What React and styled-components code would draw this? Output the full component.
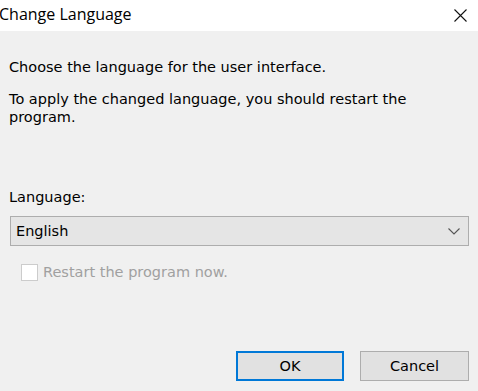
import React from "react";
import styled, { createGlobalStyle } from "styled-components";

const GlobalStyle = createGlobalStyle`
    html, body {
        margin: 0;
        padding: 0;
        background: #f0f0f0;
    }
    #root {
        width: 478px;
        height: 391px;
    }
`;

const Window = styled.div`
    width: 478px;
    height: 391px;
    display: flex;
    flex-direction: column;
    background: #f0f0f0;
    font-family: "DejaVu Sans", Tahoma, sans-serif;
    color: #000;
    overflow: hidden;
`;

const TitleBar = styled.div`
    height: 31px;
    flex-shrink: 0;
    background: #fff;
    display: flex;
    align-items: center;
    justify-content: space-between;
    padding: 0 6px 0 0;
    box-sizing: border-box;
`;

const Title = styled.span`
    font-family: "Open Sans", "Noto Sans", sans-serif;
    font-size: 16px;
    margin-left: -1px;
    margin-top: -3px;
    color: #000;
`;

const CloseButton = styled.span`
    width: 16px;
    height: 16px;
    display: flex;
    align-items: center;
    justify-content: center;
    margin-right: 4px;
    margin-top: -1px;
`;

const Body = styled.div`
    flex: 1;
    display: flex;
    flex-direction: column;
    padding: 27px 9px 10px 9px;
    font-size: 14.5px;
    line-height: 18px;
`;

const Paragraph = styled.p`
    margin: 0 0 ${props => props.gap || 0}px 0;
    width: 430px;
`;

const Label = styled.div`
    margin-bottom: 10px;
`;

const Combo = styled.div`
    height: 30px;
    box-sizing: border-box;
    margin-left: 1px;
    border: 1px solid #adadad;
    background: #e5e5e5;
    display: flex;
    align-items: center;
    justify-content: space-between;
    padding: 0 8px 0 5px;
`;

const CheckRow = styled.label`
    display: flex;
    align-items: center;
    margin: 17px 0 0 12px;
    color: #a0a0a0;
    gap: 5px;
`;

const CheckBox = styled.span`
    width: 17px;
    height: 17px;
    box-sizing: border-box;
    border: 1px solid #cccccc;
    background: #fff;
`;

const ButtonRow = styled.div`
    margin-top: auto;
    display: flex;
    justify-content: flex-end;
    gap: 16px;
`;

const Button = styled.button`
    width: ${props => props.w}px;
    height: 30px;
    box-sizing: border-box;
    font-family: "DejaVu Sans", Tahoma, sans-serif;
    font-size: 14.5px;
    color: #000;
    background: #e1e1e1;
    border: ${props => (props.primary ? "2px solid #0078d7" : "1px solid #adadad")};
    padding: 0;
    margin: 0;
`;

const App = () => (
    <Window>
        <GlobalStyle />
        <TitleBar>
            <Title>Change Language</Title>
            <CloseButton>
                <svg width="13" height="13" viewBox="0 0 13 13">
                    <path d="M0.5 0.5 L12.5 12.5 M12.5 0.5 L0.5 12.5" stroke="#111" strokeWidth="1.1" fill="none" />
                </svg>
            </CloseButton>
        </TitleBar>
        <Body>
            <Paragraph gap={14}>Choose the language for the user interface.</Paragraph>
            <Paragraph gap={62}>To apply the changed language, you should restart the program.</Paragraph>
            <Label>Language:</Label>
            <Combo>
                <span>English</span>
                <svg width="12" height="7" viewBox="0 0 12 7">
                    <path d="M0.5 0.5 L6 6 L11.5 0.5" stroke="#555" strokeWidth="1.1" fill="none" />
                </svg>
            </Combo>
            <CheckRow>
                <CheckBox />
                <span>Restart the program now.</span>
            </CheckRow>
            <ButtonRow>
                <Button primary w={108}>OK</Button>
                <Button w={109}>Cancel</Button>
            </ButtonRow>
        </Body>
    </Window>
);

export default App;
